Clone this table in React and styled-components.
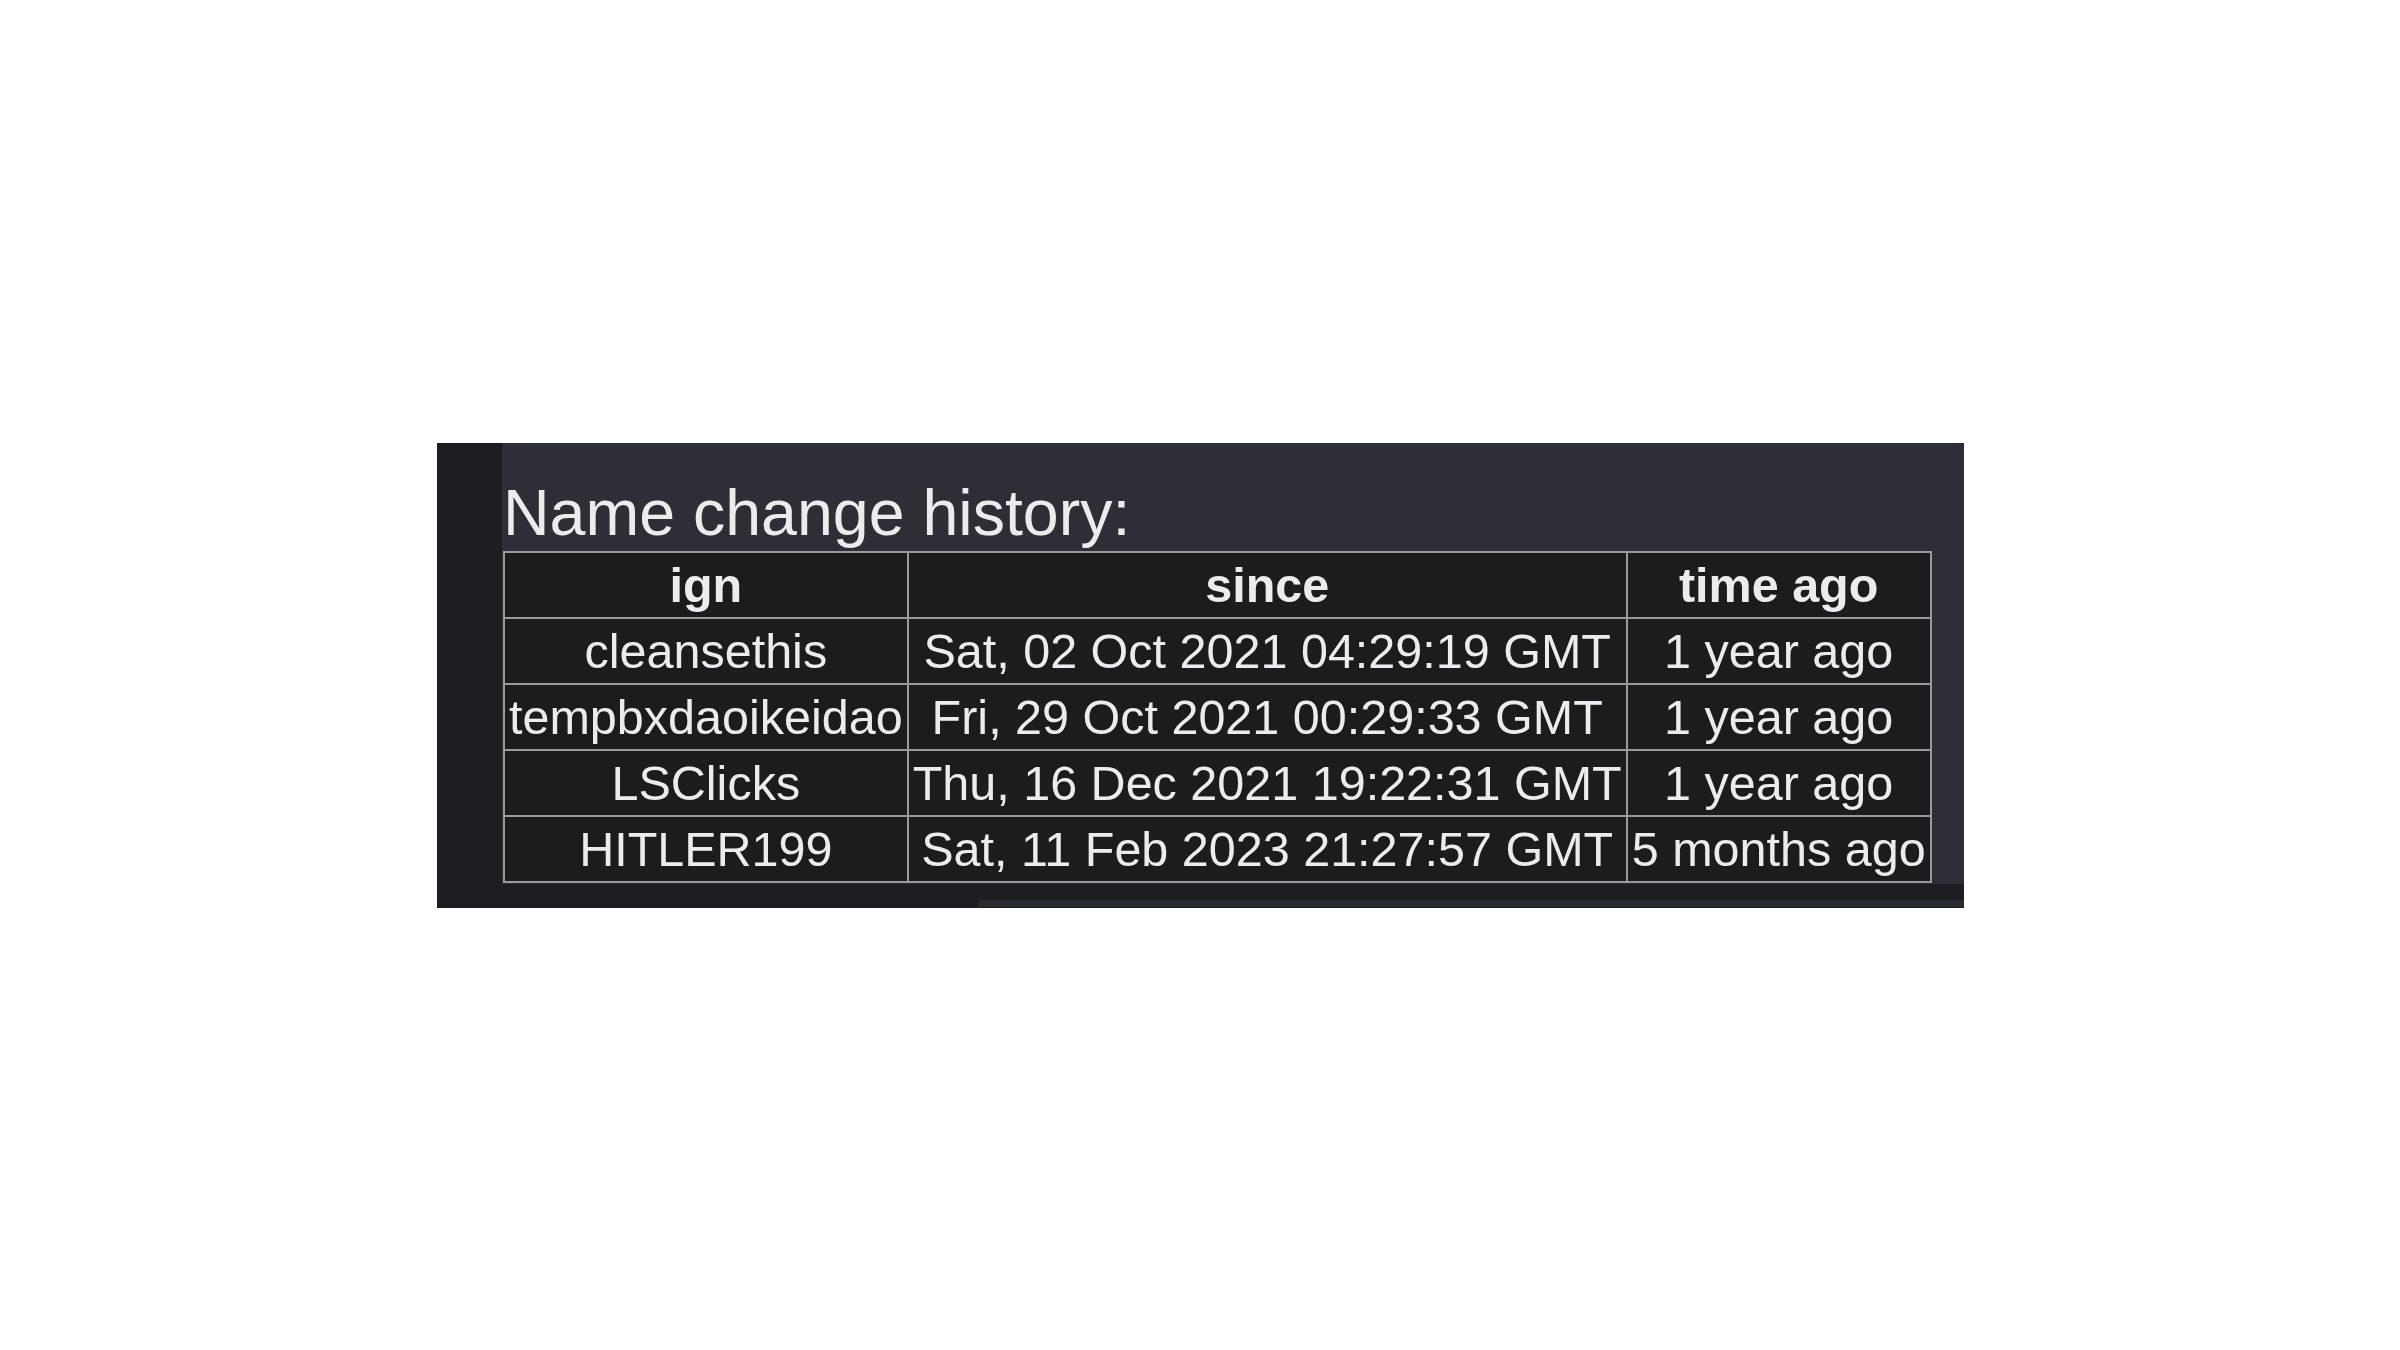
import React from "react";
import styled, { createGlobalStyle } from "styled-components";

const GlobalStyle = createGlobalStyle`
	html, body {
		margin: 0;
		padding: 0;
		background: #ffffff;
	}
	body {
		font-family: "Liberation Sans", Arial, sans-serif;
	}
`;

const Page = styled.div`
	width: 2400px;
	height: 1350px;
	padding: 443px 0 0 437px;
	box-sizing: border-box;
`;

const Panel = styled.div`
	display: flex;
	width: 1527px;
	height: 465px;
	background: #1e1e22;
`;

const Gutter = styled.div`
	width: 65px;
	flex-shrink: 0;
	background: #1e1e22;
`;

const Main = styled.div`
	flex: 1;
	display: flex;
	flex-direction: column;
`;

const Content = styled.div`
	background: #2e2f36;
	padding: 33px 0 0 1px;
	height: 441px;
	box-sizing: border-box;
`;

const Title = styled.div`
	color: #ececec;
	font-size: 64.5px;
	line-height: 74px;
	margin-bottom: 1px;
`;

const Table = styled.table`
	border-collapse: collapse;
	color: #ececec;
	font-size: 48.5px;
	background: #1c1c1f;
	border: 2px solid #9a9a9c;
`;

const Th = styled.th`
	font-weight: 700;
	line-height: 56px;
	padding: 4px;
	border: 2px solid #9a9a9c;
	text-align: center;
	white-space: nowrap;
`;

const Td = styled.td`
	line-height: 56px;
	padding: 4px;
	border: 2px solid #9a9a9c;
	text-align: center;
	white-space: nowrap;
`;

const ScrollTrack = styled.div`
	flex: 1;
	display: flex;
	align-items: flex-end;
	padding-bottom: 1px;
`;

const ScrollThumb = styled.div`
	margin-left: 477px;
	flex: 1;
	height: 7px;
	background: #2b2c31;
`;

const rows = [
	["cleansethis", "Sat, 02 Oct 2021 04:29:19 GMT", "1 year ago"],
	["tempbxdaoikeidao", "Fri, 29 Oct 2021 00:29:33 GMT", "1 year ago"],
	["LSClicks", "Thu, 16 Dec 2021 19:22:31 GMT", "1 year ago"],
	["HITLER199", "Sat, 11 Feb 2023 21:27:57 GMT", "5 months ago"],
];

export default function App() {
	return (
		<Page>
			<GlobalStyle />
			<Panel>
				<Gutter />
				<Main>
					<Content>
						<Title>Name change history:</Title>
						<Table>
							<thead>
								<tr>
									<Th>ign</Th>
									<Th>since</Th>
									<Th>time ago</Th>
								</tr>
							</thead>
							<tbody>
								{rows.map((r) => (
									<tr key={r[0]}>
										<Td>{r[0]}</Td>
										<Td>{r[1]}</Td>
										<Td>{r[2]}</Td>
									</tr>
								))}
							</tbody>
						</Table>
					</Content>
					<ScrollTrack>
						<ScrollThumb />
					</ScrollTrack>
				</Main>
			</Panel>
		</Page>
	);
}
